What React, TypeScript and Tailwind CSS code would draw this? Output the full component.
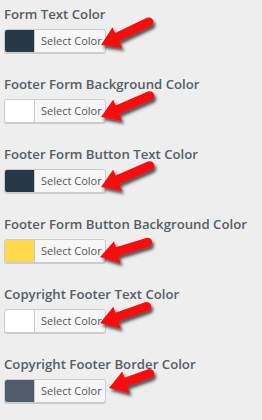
import React from "react";

type Row = { label: string; color: string; tip: [number, number]; tail: [number, number] };

const rows: Row[] = [
  { label: "Form Text Color", color: "#273847", tip: [101, 45], tail: [153, 20] },
  { label: "Footer Form Background Color", color: "#ffffff", tip: [101, 47], tail: [154, 24] },
  { label: "Footer Form Button Text Color", color: "#273847", tip: [101, 47], tail: [154, 24] },
  { label: "Footer Form Button Background Color", color: "#fed94b", tip: [100, 47], tail: [152, 31] },
  { label: "Copyright Footer Text Color", color: "#ffffff", tip: [100, 43], tail: [151, 25] },
  { label: "Copyright Footer Border Color", color: "#4f5d6b", tip: [109, 38], tail: [154, 22] },
];

function Arrow({ tip, tail, id }: { tip: [number, number]; tail: [number, number]; id: string }) {
  const dx = tail[0] - tip[0];
  const dy = tail[1] - tip[1];
  const len = Math.hypot(dx, dy);
  const ux = dx / len;
  const uy = dy / len;
  const nx = -uy;
  const ny = ux;
  const headLen = 18;
  const headW = 11;
  const shaftW = 4.6;
  const bx = tip[0] + ux * headLen;
  const by = tip[1] + uy * headLen;
  const ex = tail[0] - ux * shaftW;
  const ey = tail[1] - uy * shaftW;
  const p = (x: number, y: number) => `${x.toFixed(2)} ${y.toFixed(2)}`;
  const d = [
    `M ${p(tip[0], tip[1])}`,
    `L ${p(bx + nx * headW, by + ny * headW + 1)}`,
    `L ${p(bx + nx * shaftW, by + ny * shaftW)}`,
    `L ${p(ex + nx * shaftW, ey + ny * shaftW)}`,
    `A ${shaftW} ${shaftW} 0 0 0 ${p(ex - nx * shaftW, ey - ny * shaftW)}`,
    `L ${p(bx - nx * shaftW, by - ny * shaftW)}`,
    `L ${p(bx - nx * headW, by - ny * headW)}`,
    "Z",
  ].join(" ");
  return (
    <svg className="pointer-events-none absolute left-0 top-0" width={262} height={70} viewBox="0 0 262 70">
      <defs>
        <filter id={id} x="-20%" y="-20%" width="150%" height="160%">
          <feDropShadow dx="2" dy="3" stdDeviation="1.6" floodColor="#222" floodOpacity="0.75" />
        </filter>
      </defs>
      <path d={d} fill="#f60c0c" filter={`url(#${id})`} />
    </svg>
  );
}

export default function App() {
  return (
    <div
      className="w-[262px] h-[420px] overflow-hidden bg-[#eeeeee]"
      style={{ fontFamily: '"Open Sans", "Noto Sans", sans-serif' }}
    >
      {rows.map((r, i) => (
        <div key={i} className="relative h-[70px] px-[4px] pt-[4px]">
          <div className="h-[20px] text-[13.2px] leading-[20px] font-semibold text-[#555d66] whitespace-nowrap">
            {r.label}
          </div>
          <div className="mt-[5px] flex h-[24px] w-[102px] overflow-hidden rounded-[3px] border border-[#cccccc] bg-[#f7f7f7] shadow-[0_1px_0_#cccccc]">
            <div className="w-[30px] shrink-0 border-r border-[#cccccc]" style={{ backgroundColor: r.color }} />
            <div className="flex flex-1 items-center pl-[6px] text-[11px] text-[#555555]">Select Color</div>
          </div>
          <Arrow tip={r.tip} tail={r.tail} id={`sh${i}`} />
        </div>
      ))}
    </div>
  );
}
